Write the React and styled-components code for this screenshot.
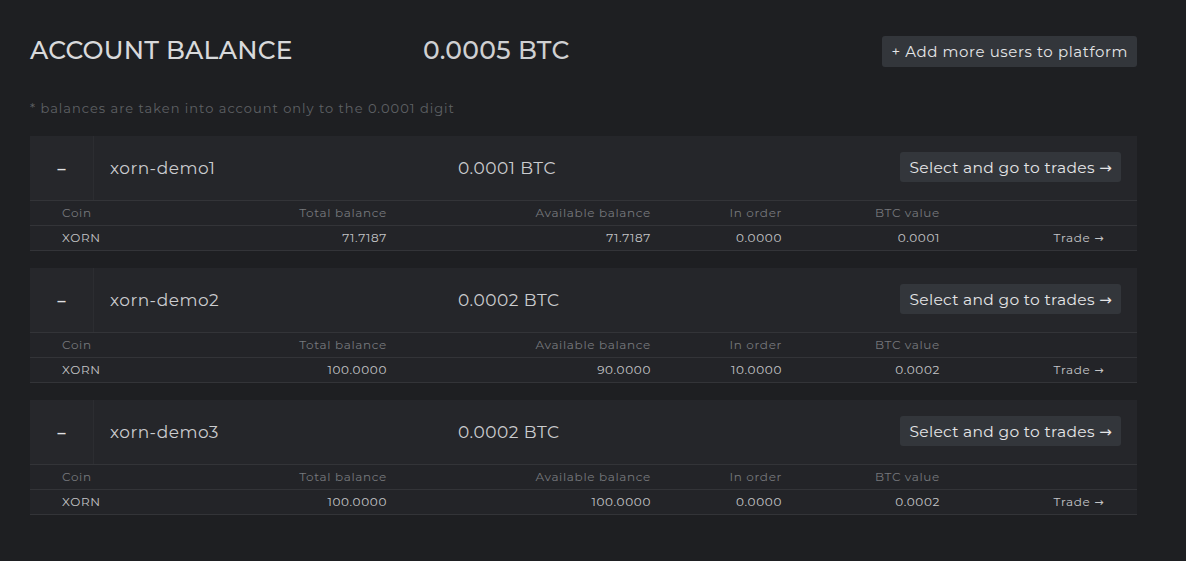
import React from "react";
import styled, { createGlobalStyle } from "styled-components";

const Global = createGlobalStyle`
  html, body { margin: 0; padding: 0; background: #1e1f22; }
  body { font-family: "Montserrat", "DejaVu Sans", "Noto Sans", sans-serif; color: #c8c9cc; }
  * { box-sizing: border-box; }
`;

const Page = styled.div`
  width: 1186px;
  min-height: 561px;
  background: #1e1f22;
  padding: 36px 49px 0 30px;
`;

const TopBar = styled.div`
  display: flex;
  align-items: center;
  height: 31px;
`;

const Title = styled.h1`
  margin: 0;
  width: 393px;
  padding-bottom: 3px;
  font-size: 25px;
  font-weight: 500;
  color: #d8d9db;
  letter-spacing: 0.2px;
`;

const Total = styled.div`
  flex: 1;
  padding-bottom: 3px;
  font-size: 25px;
  font-weight: 500;
  color: #cfd0d2;
  letter-spacing: 0.3px;
`;

const Button = styled.button`
  border: 0;
  border-radius: 3px;
  background: #33363b;
  color: #e4e5e7;
  font-family: inherit;
  font-size: ${(p) => p.$size || 15}px;
  letter-spacing: ${(p) => p.$ls || 0.6}px;
  height: ${(p) => p.$h || 31}px;
  padding: 0 ${(p) => p.$px || 9}px;
  cursor: pointer;
  white-space: nowrap;
`;

const Arrow = styled.span`
  font-family: "DejaVu Sans", sans-serif;
  font-size: ${(p) => p.$size || 14}px;
`;

const Note = styled.p`
  margin: 33px 0 20px;
  font-size: 13px;
  line-height: 16px;
  letter-spacing: 1px;
  color: #5f6165;
`;

const Card = styled.section`
  background: #242529;
  margin-bottom: 17px;
`;

const CardHeader = styled.div`
  display: flex;
  align-items: center;
  height: 65px;
  background: #25262a;
  border-bottom: 1px solid #333438;
`;

const Toggle = styled.div`
  width: 64px;
  align-self: stretch;
  display: flex;
  align-items: center;
  justify-content: center;
  background: #26272b;
  border-right: 1px solid #2c2d31;
  color: #e0e1e3;
  font-size: 16px;
  font-weight: 600;
`;

const Name = styled.div`
  width: 364px;
  padding-left: 16px;
  padding-bottom: 1px;
  font-size: 17px;
  letter-spacing: 0.5px;
  color: #cbcccf;
`;

const Amount = styled.div`
  flex: 1;
  padding-bottom: 1px;
  font-size: 17px;
  letter-spacing: 0.5px;
  color: #cbcccf;
`;

const HeaderAction = styled.div`
  padding-right: 16px;
  padding-bottom: 2px;
`;

const Row = styled.div`
  display: grid;
  grid-template-columns: 88px 237px 264px 131px 158px 1fr;
  align-items: center;
  height: 25px;
  padding: 0 33px 1px 32px;
  border-bottom: 1px solid #333438;
  font-size: 12px;
  letter-spacing: 0.65px;
  color: ${(p) => (p.$head ? "#76787c" : "#c3c4c7")};
  background: #232428;
`;

const Cell = styled.div`
  text-align: ${(p) => (p.$left ? "left" : "right")};
  white-space: nowrap;
`;

const accounts = [
  { name: "xorn-demo1", btc: "0.0001", total: "71.7187", avail: "71.7187", order: "0.0000", value: "0.0001" },
  { name: "xorn-demo2", btc: "0.0002", total: "100.0000", avail: "90.0000", order: "10.0000", value: "0.0002" },
  { name: "xorn-demo3", btc: "0.0002", total: "100.0000", avail: "100.0000", order: "0.0000", value: "0.0002" },
];

function AccountCard({ a }) {
  return (
    <Card>
      <CardHeader>
        <Toggle>–</Toggle>
        <Name>{a.name}</Name>
        <Amount>{a.btc} BTC</Amount>
        <HeaderAction>
          <Button $size={15.5} $ls={0.3} $h={30} $px={9}>
            Select and go to trades <Arrow $size={15}>→</Arrow>
          </Button>
        </HeaderAction>
      </CardHeader>
      <Row $head>
        <Cell $left>Coin</Cell>
        <Cell>Total balance</Cell>
        <Cell>Available balance</Cell>
        <Cell>In order</Cell>
        <Cell>BTC value</Cell>
        <Cell />
      </Row>
      <Row>
        <Cell $left>XORN</Cell>
        <Cell>{a.total}</Cell>
        <Cell>{a.avail}</Cell>
        <Cell>{a.order}</Cell>
        <Cell>{a.value}</Cell>
        <Cell>
          Trade <Arrow $size={11}>→</Arrow>
        </Cell>
      </Row>
    </Card>
  );
}

export default function App() {
  return (
    <>
      <Global />
      <Page>
        <TopBar>
          <Title>ACCOUNT BALANCE</Title>
          <Total>0.0005 BTC</Total>
          <Button>+ Add more users to platform</Button>
        </TopBar>
        <Note>* balances are taken into account only to the 0.0001 digit</Note>
        {accounts.map((a) => (
          <AccountCard key={a.name} a={a} />
        ))}
      </Page>
    </>
  );
}
